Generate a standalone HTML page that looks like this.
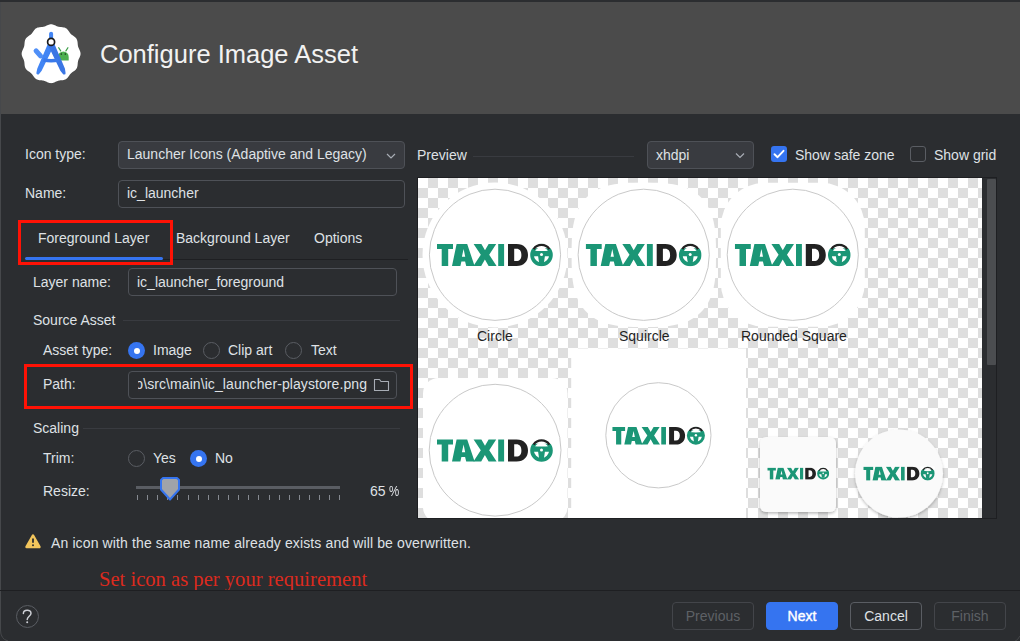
<!DOCTYPE html>
<html><head><meta charset="utf-8">
<style>
*{box-sizing:border-box;margin:0;padding:0}
html,body{width:1020px;height:641px;overflow:hidden;background:#2b2d30}
body{position:relative;font-family:"Liberation Sans",sans-serif;color:#dfe1e5;font-size:14px}
.a{position:absolute;white-space:nowrap}
.hdr{left:0;top:2px;width:1020px;height:112px;background:#4b4b4b}
.title{left:100px;top:39px;font-size:25.5px;color:#f2f2f2;line-height:30px}
.lbl{font-size:14px;color:#dfe1e5;line-height:16px}
.box{border:1px solid #4e5157;border-radius:4px;background:#2b2d30}
.combo{background:#393b40}
.red{border:3.4px solid #ff1205}
.sep{height:1px;background:#393b40}
.radio{width:17px;height:17px;border-radius:50%;border:1px solid #5a5d63;background:#2b2d30}
.radio.on{border:none;background:#3574f0}
.radio.on:after{content:"";position:absolute;left:5.5px;top:5.5px;width:6px;height:6px;border-radius:50%;background:#fff}
.btn{border:1px solid #4e5157;border-radius:4px;height:28px;line-height:26px;text-align:center;font-size:14px}
.chk{width:16px;height:16px;border-radius:3px}
.checker{background-color:#fff;background-image:conic-gradient(#dedede 25%,#fff 0 50%,#dedede 0 75%,#fff 0);background-size:20px 20px}
.plbl{font-size:14px;color:#1f1f1f;line-height:16px}
.tick{position:absolute;top:495px;width:1px;height:5px;background:#868a91}
</style></head><body>
<svg width="0" height="0" style="position:absolute">
<defs>
<symbol id="taxi" viewBox="0 0 116 23">
<g fill="#1b9676">
<path d="M0,0.5H16V5.6H11.2V22.5H4.7V5.6H0Z"/>
<path fill-rule="evenodd" d="M15,22.5L19.6,0.5H30.2L37.6,22.5H29.2L28.1,18H24.4L23.4,22.5ZM24.9,13.2H28.2L26.6,5.6Z"/>
<path d="M36.6,0.5H44.4L48,6.8L51.6,0.5H59.2L52.2,11.2L59.6,22.5H51.6L47.9,15.9L44.2,22.5H36.4L43.8,11.2Z"/>
<path d="M61.2,0.5H67.1V22.5H61.2Z"/>
</g>
<path fill="#222222" fill-rule="evenodd" d="M71,0.5H79.5C87,0.5 91,5.2 91,11.5C91,17.8 87,22.5 79.5,22.5H71ZM77.2,5.2V17.6H79.4C82.6,17.6 84.4,15.4 84.4,11.4C84.4,7.4 82.6,5.2 79.4,5.2Z"/>
<g transform="translate(104.5,11.4)">
<path fill-rule="evenodd" d="M-11.3,0A11.3,11.3 0 1 0 11.3,0A11.3,11.3 0 1 0 -11.3,0ZM-7.6,0A7.6,7.6 0 1 0 7.6,0A7.6,7.6 0 1 0 -7.6,0Z" fill="#1b9676"/>
<path d="M-12,-5.9L-9.5,-6.6H9.5L12,-5.9V-13H-12Z" fill="#fff"/>
<path d="M-8.8,-4.5Q0,-3.3 8.8,-4.5V1.3H3.4L2.4,8H-2.4L-3.4,1.3H-8.8Z" fill="#1b9676"/>
<circle cx="0" cy="-0.4" r="1.5" fill="#fff"/>
<path d="M-7.9,-5.8A9.6,9.6 0 0 1 7.9,-5.8" fill="none" stroke="#222" stroke-width="2.3"/>
</g>
</symbol>
</defs>
</svg>
<div class="a hdr"></div>
<div class="a" style="left:0;top:2px;width:1px;height:628px;background:#46484b"></div>
<svg class="a" style="left:0;top:620px" width="20" height="21"><path d="M0.5,0V10Q0.5,19 8,21" fill="none" stroke="#46484b" stroke-width="1"/></svg>
<svg class="a" style="left:1005px;top:625px" width="15" height="16"><path d="M15,11Q13,15 9,17" fill="none" stroke="#46484b" stroke-width="1"/></svg>
<svg class="a" style="left:0;top:0" width="110" height="110" viewBox="0 0 110 110">
<g transform="translate(51.1,53.7)">
<path d="M29.45,0.00 L29.40,0.77 L29.27,1.53 L29.05,2.29 L28.77,3.02 L28.45,3.75 L28.12,4.45 L27.79,5.15 L27.48,5.84 L27.21,6.53 L27.00,7.23 L26.83,7.95 L26.72,8.68 L26.64,9.43 L26.58,10.20 L26.52,10.98 L26.43,11.77 L26.30,12.55 L26.11,13.30 L25.85,14.03 L25.50,14.72 L25.08,15.37 L24.58,15.96 L24.02,16.51 L23.41,17.01 L22.77,17.47 L22.12,17.92 L21.49,18.35 L20.88,18.80 L20.30,19.26 L19.76,19.76 L19.26,20.30 L18.80,20.88 L18.35,21.49 L17.92,22.12 L17.47,22.77 L17.01,23.41 L16.51,24.02 L15.96,24.58 L15.37,25.08 L14.73,25.50 L14.03,25.85 L13.30,26.11 L12.55,26.30 L11.77,26.43 L10.98,26.52 L10.20,26.58 L9.43,26.64 L8.68,26.72 L7.95,26.83 L7.23,27.00 L6.53,27.21 L5.84,27.48 L5.15,27.79 L4.45,28.12 L3.75,28.45 L3.02,28.77 L2.29,29.05 L1.53,29.27 L0.77,29.40 L0.00,29.45 L-0.77,29.40 L-1.53,29.27 L-2.29,29.05 L-3.02,28.77 L-3.75,28.45 L-4.45,28.12 L-5.15,27.79 L-5.84,27.48 L-6.53,27.21 L-7.23,27.00 L-7.95,26.83 L-8.68,26.72 L-9.43,26.64 L-10.20,26.58 L-10.98,26.52 L-11.77,26.43 L-12.55,26.30 L-13.30,26.11 L-14.03,25.85 L-14.72,25.50 L-15.37,25.08 L-15.96,24.58 L-16.51,24.02 L-17.01,23.41 L-17.47,22.77 L-17.92,22.12 L-18.35,21.49 L-18.80,20.88 L-19.26,20.30 L-19.76,19.76 L-20.30,19.26 L-20.88,18.80 L-21.49,18.35 L-22.12,17.92 L-22.77,17.47 L-23.41,17.01 L-24.02,16.51 L-24.58,15.96 L-25.08,15.37 L-25.50,14.72 L-25.85,14.03 L-26.11,13.30 L-26.30,12.55 L-26.43,11.77 L-26.52,10.98 L-26.58,10.20 L-26.64,9.43 L-26.72,8.68 L-26.83,7.95 L-27.00,7.23 L-27.21,6.53 L-27.48,5.84 L-27.79,5.15 L-28.12,4.45 L-28.45,3.75 L-28.77,3.02 L-29.05,2.29 L-29.27,1.53 L-29.40,0.77 L-29.45,0.00 L-29.40,-0.77 L-29.27,-1.53 L-29.05,-2.29 L-28.77,-3.02 L-28.45,-3.75 L-28.12,-4.45 L-27.79,-5.15 L-27.48,-5.84 L-27.21,-6.53 L-27.00,-7.23 L-26.83,-7.95 L-26.72,-8.68 L-26.64,-9.43 L-26.58,-10.20 L-26.52,-10.98 L-26.43,-11.77 L-26.30,-12.55 L-26.11,-13.30 L-25.85,-14.03 L-25.50,-14.72 L-25.08,-15.37 L-24.58,-15.96 L-24.02,-16.51 L-23.41,-17.01 L-22.77,-17.47 L-22.12,-17.92 L-21.49,-18.35 L-20.88,-18.80 L-20.30,-19.26 L-19.76,-19.76 L-19.26,-20.30 L-18.80,-20.88 L-18.35,-21.49 L-17.92,-22.12 L-17.47,-22.77 L-17.01,-23.41 L-16.51,-24.02 L-15.96,-24.58 L-15.37,-25.08 L-14.73,-25.50 L-14.03,-25.85 L-13.30,-26.11 L-12.55,-26.30 L-11.77,-26.43 L-10.98,-26.52 L-10.20,-26.58 L-9.43,-26.64 L-8.68,-26.72 L-7.95,-26.83 L-7.23,-27.00 L-6.53,-27.21 L-5.84,-27.48 L-5.15,-27.79 L-4.45,-28.12 L-3.75,-28.45 L-3.02,-28.77 L-2.29,-29.05 L-1.53,-29.27 L-0.77,-29.40 L-0.00,-29.45 L0.77,-29.40 L1.53,-29.27 L2.29,-29.05 L3.02,-28.77 L3.75,-28.45 L4.45,-28.12 L5.15,-27.79 L5.84,-27.48 L6.53,-27.21 L7.23,-27.00 L7.95,-26.83 L8.68,-26.72 L9.43,-26.64 L10.20,-26.58 L10.98,-26.52 L11.77,-26.43 L12.55,-26.30 L13.30,-26.11 L14.03,-25.85 L14.73,-25.50 L15.37,-25.08 L15.96,-24.58 L16.51,-24.02 L17.01,-23.41 L17.47,-22.77 L17.92,-22.12 L18.35,-21.49 L18.80,-20.88 L19.26,-20.30 L19.76,-19.76 L20.30,-19.26 L20.88,-18.80 L21.49,-18.35 L22.12,-17.92 L22.77,-17.47 L23.41,-17.01 L24.02,-16.51 L24.58,-15.96 L25.08,-15.37 L25.50,-14.72 L25.85,-14.03 L26.11,-13.30 L26.30,-12.55 L26.43,-11.77 L26.52,-10.98 L26.58,-10.20 L26.64,-9.43 L26.72,-8.68 L26.83,-7.95 L27.00,-7.23 L27.21,-6.53 L27.48,-5.84 L27.79,-5.15 L28.12,-4.45 L28.45,-3.75 L28.77,-3.02 L29.05,-2.29 L29.27,-1.53 L29.40,-0.77Z" fill="#fff"/>
<g transform="translate(12.2,1.2)">
<path d="M-2.6,-4L-4.6,-7.2M2.6,-4L4.6,-7.2" stroke="#3c9e48" stroke-width="1.2" stroke-linecap="round"/>
<path d="M-5.4,2A5.4,5.4 0 0 1 5.4,2V5.6H-5.4Z" fill="#4caf50"/>
<circle cx="-2" cy="-0.8" r="0.8" fill="#1a3a1a"/><circle cx="2" cy="-0.8" r="0.8" fill="#1a3a1a"/>
</g>
<path d="M-15,-2.8L-10.6,2.2" stroke="#4f8ff7" stroke-width="5" stroke-linecap="round"/>
<path d="M-1.2,-10.8L-12.4,15.4L-13.2,19.4L-10.8,16.4L1.8,-9.4Z" fill="#4285f4" stroke="#4285f4" stroke-width="3" stroke-linejoin="round"/>
<path d="M1.2,-10.8L12.4,15.4L13,19.4L10.6,16.4L-1.8,-9.4Z" fill="#3b76e4" stroke="#3b76e4" stroke-width="3" stroke-linejoin="round"/>
<path d="M-7.6,6.4Q0,7.8 7.6,6.4" stroke="#3a79ea" stroke-width="3.6" fill="none"/>
<path d="M0,-20V-13" stroke="#4285f4" stroke-width="4" stroke-linecap="round"/>
<circle cx="0" cy="-11.8" r="3.5" fill="#fff" stroke="#1a1a1a" stroke-width="1.7"/>
</g>
</svg>
<div class="a title">Configure Image Asset</div>
<div class="a lbl" style="left:25px;top:146px">Icon type:</div>
<div class="a box combo" style="left:118px;top:141px;width:287px;height:28px"></div>
<div class="a lbl" style="left:127px;top:146px">Launcher Icons (Adaptive and Legacy)</div>
<svg class="a" style="left:385px;top:151px" width="12" height="10"><path d="M2,3L6,7L10,3" fill="none" stroke="#a8adb5" stroke-width="1.2"/></svg>

<div class="a lbl" style="left:25px;top:185px">Name:</div>
<div class="a box" style="left:118px;top:180px;width:287px;height:28px"></div>
<div class="a lbl" style="left:127px;top:185px">ic_launcher</div>

<div class="a lbl" style="left:38px;top:230px">Foreground Layer</div>
<div class="a lbl" style="left:176px;top:230px">Background Layer</div>
<div class="a lbl" style="left:314px;top:230px">Options</div>
<div class="a" style="left:25px;top:259px;width:383px;height:1px;background:#1e1f22"></div>
<div class="a" style="left:25px;top:257px;width:138px;height:3px;border-radius:2px;background:#3574f0"></div>
<div class="a red" style="left:18px;top:220px;width:155px;height:45px"></div>

<div class="a lbl" style="left:33px;top:274px">Layer name:</div>
<div class="a box" style="left:128px;top:268px;width:269px;height:28px"></div>
<div class="a lbl" style="left:137px;top:274px">ic_launcher_foreground</div>

<div class="a lbl" style="left:33px;top:312px">Source Asset</div>
<div class="a sep" style="left:123px;top:320px;width:277px"></div>

<div class="a lbl" style="left:43px;top:342px">Asset type:</div>
<div class="a radio on" style="left:128px;top:342px"></div>
<div class="a lbl" style="left:153px;top:342px">Image</div>
<div class="a radio" style="left:203px;top:342px"></div>
<div class="a lbl" style="left:228px;top:342px">Clip art</div>
<div class="a radio" style="left:285px;top:342px"></div>
<div class="a lbl" style="left:311px;top:342px">Text</div>

<div class="a lbl" style="left:43px;top:376px">Path:</div>
<div class="a box" style="left:128px;top:371px;width:269px;height:28px"></div>
<div class="a lbl" style="left:138px;top:376px;width:229px;height:18px;overflow:hidden"><span style="position:absolute;right:0;top:0;letter-spacing:0.08px">app\src\main\ic_launcher-playstore.png</span></div>
<svg class="a" style="left:373px;top:377px" width="18" height="16"><path d="M1.5,2.5H6.5L8,4.5H15.5V13.5H1.5Z" fill="none" stroke="#a8adb5" stroke-width="1.1" stroke-linejoin="round"/></svg>
<div class="a red" style="left:24px;top:364px;width:389px;height:45px"></div>

<div class="a lbl" style="left:33px;top:420px">Scaling</div>
<div class="a sep" style="left:83px;top:428px;width:317px"></div>

<div class="a lbl" style="left:43px;top:450px">Trim:</div>
<div class="a radio" style="left:128px;top:450px"></div>
<div class="a lbl" style="left:153px;top:450px">Yes</div>
<div class="a radio on" style="left:190px;top:450px"></div>
<div class="a lbl" style="left:215px;top:450px">No</div>

<div class="a lbl" style="left:43px;top:483px">Resize:</div>
<div class="a" style="left:136px;top:486px;width:204px;height:3px;background:#5a5d63"></div>
<div class="tick" style="left:137px"></div><div class="tick" style="left:147px"></div><div class="tick" style="left:157px"></div><div class="tick" style="left:167px"></div><div class="tick" style="left:177px"></div><div class="tick" style="left:188px"></div><div class="tick" style="left:198px"></div><div class="tick" style="left:208px"></div><div class="tick" style="left:218px"></div><div class="tick" style="left:228px"></div><div class="tick" style="left:238px"></div><div class="tick" style="left:248px"></div><div class="tick" style="left:258px"></div><div class="tick" style="left:269px"></div><div class="tick" style="left:279px"></div><div class="tick" style="left:289px"></div><div class="tick" style="left:299px"></div><div class="tick" style="left:309px"></div><div class="tick" style="left:319px"></div><div class="tick" style="left:329px"></div><div class="tick" style="left:339px"></div>
<svg class="a" style="left:159px;top:476px" width="22" height="26"><path d="M4,2H18L20,4V13.5L11,23.5L2,13.5V4Z" fill="#a0a3a9" stroke="#3574f0" stroke-width="2" stroke-linejoin="round"/></svg>
<div class="a lbl" style="left:370px;top:483px;word-spacing:-0.8px">65 <span style="display:inline-block;transform:scaleX(0.82);transform-origin:0 0">%</span></div>

<svg class="a" style="left:24px;top:533px" width="18" height="17"><path d="M9,2.7L15.4,14H2.6Z" fill="#f2c55c" stroke="#f2c55c" stroke-width="2.6" stroke-linejoin="round"/><path d="M9,5.6V9.8" stroke="#2b2d30" stroke-width="1.8"/><circle cx="9" cy="12.2" r="1" fill="#2b2d30"/></svg>
<div class="a lbl" style="left:51px;top:535px;letter-spacing:0.125px">An icon with the same name already exists and will be overwritten.</div>
<div class="a" style="left:99px;top:567px;font-family:'Liberation Serif',serif;font-size:20.6px;line-height:24px;color:#dc2a1e">Set icon as per your requirement</div>

<div class="a" style="left:0;top:590px;width:1020px;height:1px;background:#1e1f22"></div>
<div class="a" style="left:16px;top:605px;width:23px;height:23px;border-radius:50%;border:1px solid #5a5d63"></div>
<svg class="a" style="left:0;top:590px" width="50" height="50"><path d="M23.4,23.4C23.4,19.4 31,19.2 31,23.2C31,26.2 27.2,26.4 27.2,29.6" fill="none" stroke="#ced0d6" stroke-width="1.5" stroke-linecap="round"/><circle cx="27.2" cy="32.2" r="1" fill="#ced0d6"/></svg>

<div class="a btn" style="left:672px;top:602px;width:82px;color:#5e6166;border-color:#43454a">Previous</div>
<div class="a btn" style="left:766px;top:602px;width:72px;background:#3574f0;border-color:#3574f0;color:#fff;-webkit-text-stroke:0.4px #fff">Next</div>
<div class="a btn" style="left:850px;top:602px;width:72px;border-color:#5a5d63">Cancel</div>
<div class="a btn" style="left:934px;top:602px;width:72px;color:#5e6166;border-color:#43454a">Finish</div>
<div class="a lbl" style="left:417px;top:147px">Preview</div>
<div class="a sep" style="left:473px;top:156px;width:161px"></div>
<div class="a box combo" style="left:647px;top:141px;width:107px;height:28px"></div>
<div class="a lbl" style="left:656px;top:147px">xhdpi</div>
<svg class="a" style="left:734px;top:150px" width="12" height="10"><path d="M2,3.5L6,7.5L10,3.5" fill="none" stroke="#a8adb5" stroke-width="1.2"/></svg>
<div class="a chk" style="left:771px;top:146px;background:#3574f0"></div>
<svg class="a" style="left:771px;top:146px" width="16" height="16"><path d="M3.5,8.2L6.6,11.2L12.5,4.8" fill="none" stroke="#fff" stroke-width="1.9" stroke-linecap="round" stroke-linejoin="round"/></svg>
<div class="a lbl" style="left:795px;top:147px">Show safe zone</div>
<div class="a chk" style="left:910px;top:146px;border:1px solid #5a5d63"></div>
<div class="a lbl" style="left:934px;top:147px">Show grid</div>

<div class="a" style="left:417px;top:177px;width:580px;height:342px;border:1px solid #1e1f22"></div>
<div class="a" style="left:987px;top:179px;width:8.5px;height:186px;border-radius:1px;background:#4b4d50"></div>
<div class="a checker" style="left:418px;top:178px;width:564px;height:340px;overflow:hidden">
<svg width="565" height="340" viewBox="418 178 565 340" style="position:absolute;left:0;top:0">
<defs>
<filter id="sh" x="-20%" y="-20%" width="140%" height="150%"><feDropShadow dx="0" dy="1.5" stdDeviation="1.5" flood-color="#000" flood-opacity="0.28"/></filter>
</defs>
<!-- row 1 -->
<circle cx="495" cy="255" r="72.5" fill="#fff"/>
<circle cx="495" cy="254.8" r="65.6" fill="none" stroke="#c9c9c9" stroke-width="1"/>
<use href="#taxi" x="437" y="243.5" width="116" height="23"/>

<path transform="translate(643.8,254.8) scale(72.2)" d="M1.0000,0.0000 L0.9991,0.1399 L0.9963,0.2219 L0.9918,0.2903 L0.9854,0.3510 L0.9772,0.4061 L0.9671,0.4571 L0.9552,0.5045 L0.9415,0.5490 L0.9259,0.5907 L0.9086,0.6300 L0.8893,0.6669 L0.8682,0.7017 L0.8453,0.7344 L0.8204,0.7650 L0.7937,0.7937 L0.7650,0.8204 L0.7344,0.8453 L0.7017,0.8682 L0.6669,0.8893 L0.6300,0.9086 L0.5907,0.9259 L0.5490,0.9415 L0.5045,0.9552 L0.4571,0.9671 L0.4061,0.9772 L0.3510,0.9854 L0.2903,0.9918 L0.2219,0.9963 L0.1399,0.9991 L0.0000,1.0000 L-0.1399,0.9991 L-0.2219,0.9963 L-0.2903,0.9918 L-0.3510,0.9854 L-0.4061,0.9772 L-0.4571,0.9671 L-0.5045,0.9552 L-0.5490,0.9415 L-0.5907,0.9259 L-0.6300,0.9086 L-0.6669,0.8893 L-0.7017,0.8682 L-0.7344,0.8453 L-0.7650,0.8204 L-0.7937,0.7937 L-0.8204,0.7650 L-0.8453,0.7344 L-0.8682,0.7017 L-0.8893,0.6669 L-0.9086,0.6300 L-0.9259,0.5907 L-0.9415,0.5490 L-0.9552,0.5045 L-0.9671,0.4571 L-0.9772,0.4061 L-0.9854,0.3510 L-0.9918,0.2903 L-0.9963,0.2219 L-0.9991,0.1399 L-1.0000,0.0000 L-0.9991,-0.1399 L-0.9963,-0.2219 L-0.9918,-0.2903 L-0.9854,-0.3510 L-0.9772,-0.4061 L-0.9671,-0.4571 L-0.9552,-0.5045 L-0.9415,-0.5490 L-0.9259,-0.5907 L-0.9086,-0.6300 L-0.8893,-0.6669 L-0.8682,-0.7017 L-0.8453,-0.7344 L-0.8204,-0.7650 L-0.7937,-0.7937 L-0.7650,-0.8204 L-0.7344,-0.8453 L-0.7017,-0.8682 L-0.6669,-0.8893 L-0.6300,-0.9086 L-0.5907,-0.9259 L-0.5490,-0.9415 L-0.5045,-0.9552 L-0.4571,-0.9671 L-0.4061,-0.9772 L-0.3510,-0.9854 L-0.2903,-0.9918 L-0.2219,-0.9963 L-0.1399,-0.9991 L-0.0000,-1.0000 L0.1399,-0.9991 L0.2219,-0.9963 L0.2903,-0.9918 L0.3510,-0.9854 L0.4061,-0.9772 L0.4571,-0.9671 L0.5045,-0.9552 L0.5490,-0.9415 L0.5907,-0.9259 L0.6300,-0.9086 L0.6669,-0.8893 L0.7017,-0.8682 L0.7344,-0.8453 L0.7650,-0.8204 L0.7937,-0.7937 L0.8204,-0.7650 L0.8453,-0.7344 L0.8682,-0.7017 L0.8893,-0.6669 L0.9086,-0.6300 L0.9259,-0.5907 L0.9415,-0.5490 L0.9552,-0.5045 L0.9671,-0.4571 L0.9772,-0.4061 L0.9854,-0.3510 L0.9918,-0.2903 L0.9963,-0.2219 L0.9991,-0.1399Z" fill="#fff"/>
<circle cx="643.7" cy="254.8" r="65.6" fill="none" stroke="#c9c9c9" stroke-width="1"/>
<use href="#taxi" x="585.7" y="243.5" width="116" height="23"/>

<rect x="720.8" y="182.8" width="144" height="144" rx="44" fill="#fff"/>
<circle cx="792.8" cy="254.8" r="65.6" fill="none" stroke="#c9c9c9" stroke-width="1"/>
<use href="#taxi" x="734.8" y="243.5" width="116" height="23"/>

<!-- row 2 -->
<rect x="423" y="378" width="144.5" height="144.5" rx="15.5" fill="#fff"/>
<circle cx="495.1" cy="450.2" r="65.9" fill="none" stroke="#c9c9c9" stroke-width="1"/>
<use href="#taxi" x="437" y="439" width="116" height="23"/>

<rect x="571.2" y="348.5" width="174.8" height="175" fill="#fff"/>
<circle cx="658.4" cy="435.3" r="52.6" fill="none" stroke="#c9c9c9" stroke-width="1"/>
<use href="#taxi" x="612.2" y="426.5" width="93" height="18.4"/>

<rect x="760" y="437" width="76" height="75" rx="6" fill="#fafafa" filter="url(#sh)"/>
<use href="#taxi" x="767.3" y="467.5" width="62" height="12.3"/>

<circle cx="899" cy="473.5" r="44" fill="#fafafa" filter="url(#sh)"/>
<use href="#taxi" x="863.3" y="466.5" width="71.5" height="14.2"/>
</svg>
</div>
<div class="a plbl" style="left:477px;top:328px">Circle</div>
<div class="a plbl" style="left:619px;top:328px">Squircle</div>
<div class="a plbl" style="left:741px;top:328px">Rounded Square</div>

</body></html>
